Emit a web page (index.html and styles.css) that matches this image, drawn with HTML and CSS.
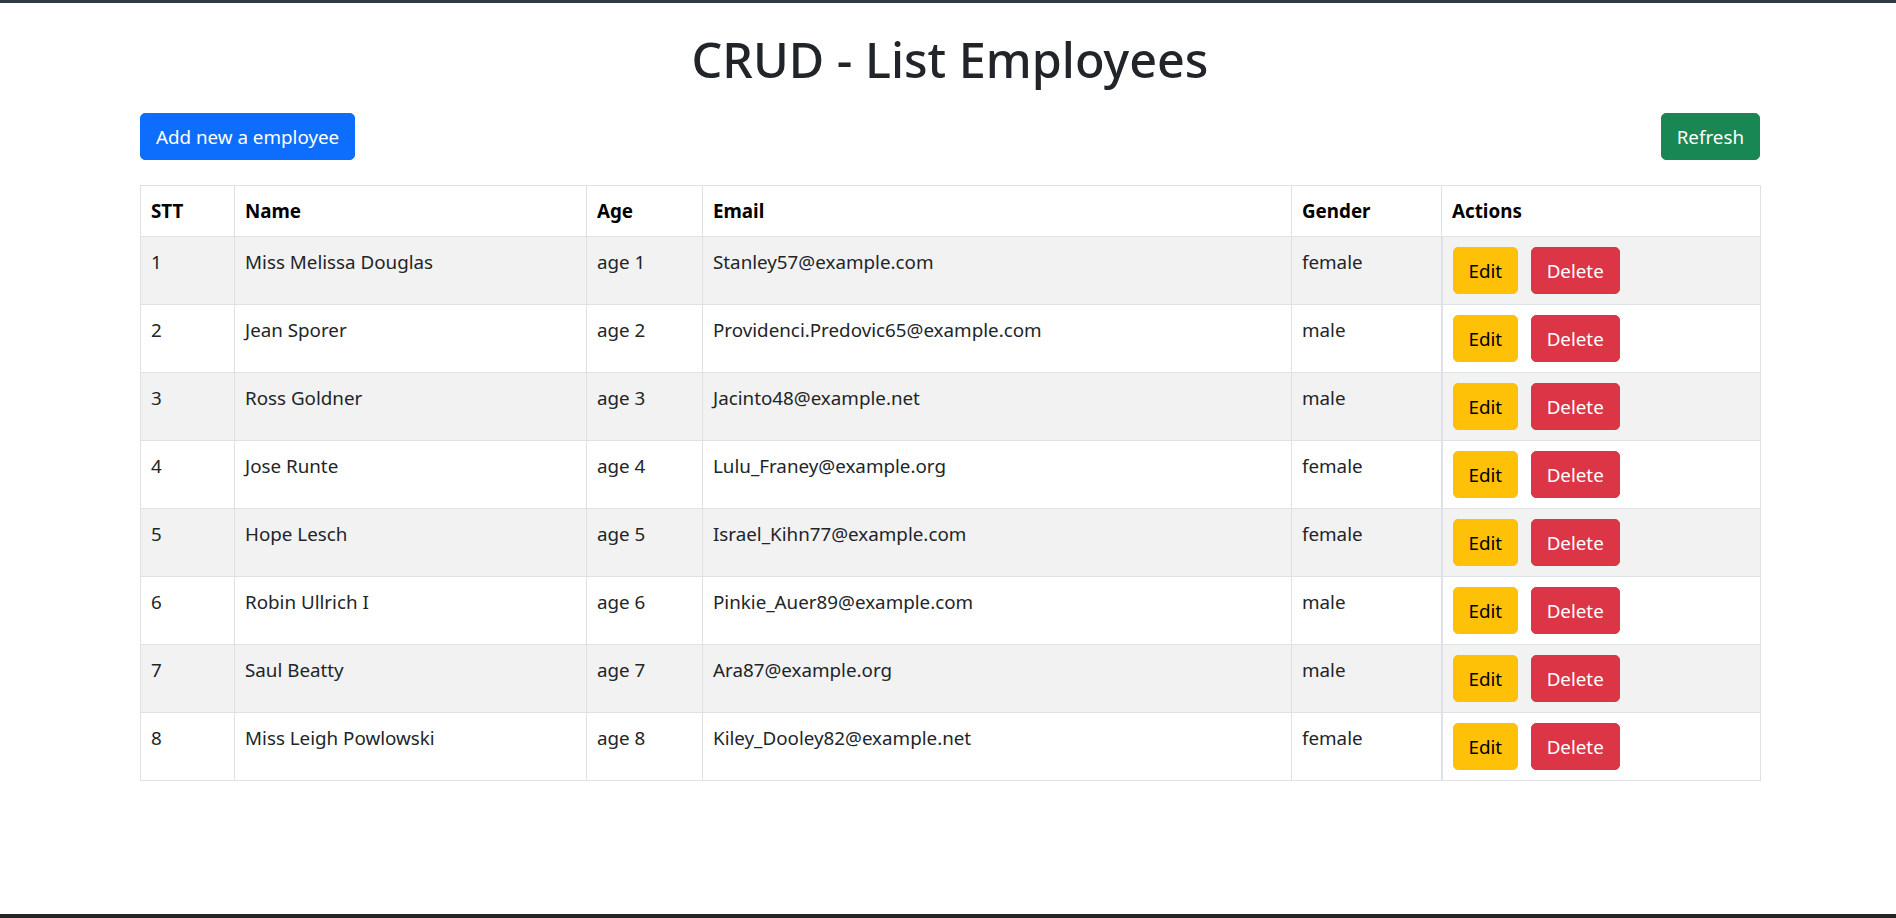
FILE: index.html
```html
<!DOCTYPE html>
<html lang="en">
<head>
<meta charset="utf-8">
<title>CRUD - List Employees</title>
<link rel="stylesheet" href="styles.css">
</head>
<body>
<main class="page">
  <div class="container">
    <h1 class="title">CRUD - List Employees</h1>
    <div class="toolbar">
      <button class="btn btn-primary">Add new a employee</button>
      <button class="btn btn-success">Refresh</button>
    </div>
    <table class="table">
      <colgroup>
        <col class="c-stt"><col class="c-name"><col class="c-age"><col class="c-email"><col class="c-gender"><col class="c-actions">
      </colgroup>
      <thead>
        <tr><th>STT</th><th>Name</th><th>Age</th><th>Email</th><th>Gender</th><th>Actions</th></tr>
      </thead>
      <tbody>
        <tr><td>1</td><td>Miss Melissa Douglas</td><td>age 1</td><td>Stanley57@example.com</td><td>female</td><td class="actions"><button class="btn btn-warning">Edit</button><button class="btn btn-danger">Delete</button></td></tr>
        <tr><td>2</td><td>Jean Sporer</td><td>age 2</td><td>Providenci.Predovic65@example.com</td><td>male</td><td class="actions"><button class="btn btn-warning">Edit</button><button class="btn btn-danger">Delete</button></td></tr>
        <tr><td>3</td><td>Ross Goldner</td><td>age 3</td><td>Jacinto48@example.net</td><td>male</td><td class="actions"><button class="btn btn-warning">Edit</button><button class="btn btn-danger">Delete</button></td></tr>
        <tr><td>4</td><td>Jose Runte</td><td>age 4</td><td>Lulu_Franey@example.org</td><td>female</td><td class="actions"><button class="btn btn-warning">Edit</button><button class="btn btn-danger">Delete</button></td></tr>
        <tr><td>5</td><td>Hope Lesch</td><td>age 5</td><td>Israel_Kihn77@example.com</td><td>female</td><td class="actions"><button class="btn btn-warning">Edit</button><button class="btn btn-danger">Delete</button></td></tr>
        <tr><td>6</td><td>Robin Ullrich I</td><td>age 6</td><td>Pinkie_Auer89@example.com</td><td>male</td><td class="actions"><button class="btn btn-warning">Edit</button><button class="btn btn-danger">Delete</button></td></tr>
        <tr><td>7</td><td>Saul Beatty</td><td>age 7</td><td>Ara87@example.org</td><td>male</td><td class="actions"><button class="btn btn-warning">Edit</button><button class="btn btn-danger">Delete</button></td></tr>
        <tr><td>8</td><td>Miss Leigh Powlowski</td><td>age 8</td><td>Kiley_Dooley82@example.net</td><td>female</td><td class="actions"><button class="btn btn-warning">Edit</button><button class="btn btn-danger">Delete</button></td></tr>
      </tbody>
    </table>
  </div>
</main>
<div class="bottom-bar"></div>
</body>
</html>
```

FILE: styles.css
```css
* { box-sizing: border-box; }

html, body { height: 100%; }

body {
  margin: 0;
  border-top: 3px solid #303a47;
  display: flex;
  flex-direction: column;
  font-family: "Noto Sans", "Open Sans", sans-serif;
  font-size: 18.8px;
  line-height: 30px;
  color: #212529;
  background: #fff;
}

.page { flex: 1; }

.bottom-bar {
  height: 4px;
  background: #252525;
}

.container {
  width: 1650px;
  margin: 0 auto;
  padding: 0 15px;
  transform: translateX(2px);
}

.title {
  margin: 26px 0 24px;
  font-size: 48.5px;
  font-weight: 500;
  line-height: 60px;
  text-align: center;
  color: #212529;
}

.toolbar {
  display: flex;
  justify-content: space-between;
  margin-bottom: 25px;
}

.btn {
  font-family: inherit;
  font-size: 18.8px;
  line-height: 30px;
  padding: 7.5px 15px;
  border: 1px solid transparent;
  border-radius: 5px;
  cursor: pointer;
}

.btn-primary { background: #0d6efd; border-color: #0d6efd; color: #fff; }
.btn-success { background: #198754; border-color: #198754; color: #fff; }
.btn-warning { background: #ffc107; border-color: #ffc107; color: #000; }
.btn-danger  { background: #dc3545; border-color: #dc3545; color: #fff; }

.table {
  width: 100%;
  border-collapse: collapse;
  table-layout: fixed;
}

.c-stt { width: 94px; }
.c-name { width: 352px; }
.c-age { width: 116px; }
.c-email { width: 589px; }
.c-gender { width: 150px; }
.c-actions { width: 319px; }

.table th,
.table td {
  border: 1px solid #dee2e6;
  padding: 10px;
  text-align: left;
  vertical-align: top;
  white-space: nowrap;
}

.table th {
  font-weight: 700;
  color: #000;
}

.table tbody tr:nth-child(odd) td { background: #f2f2f2; }

.table td.actions {
  border-left-width: 2px;
}

.actions .btn-warning { margin-right: 12.5px; }
```
